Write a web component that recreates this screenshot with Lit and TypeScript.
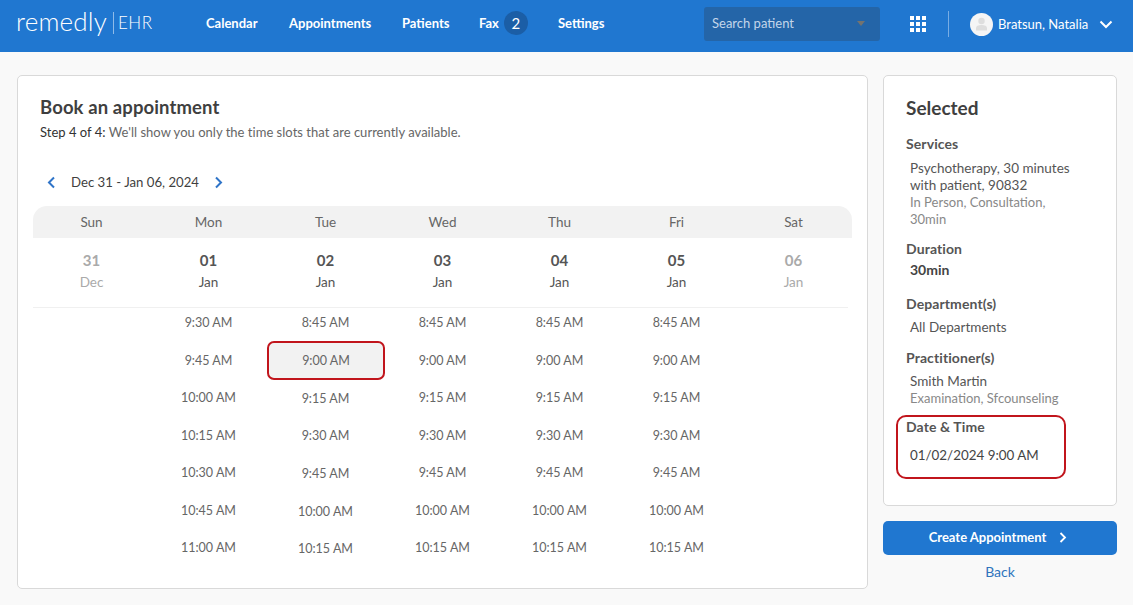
import { LitElement, html, css } from 'lit';
import { customElement } from 'lit/decorators.js';

const days = [
  { name: 'Sun', num: '31', mon: 'Dec', off: true, slots: [] as string[] },
  { name: 'Mon', num: '01', mon: 'Jan', off: false, slots: ['9:30 AM', '9:45 AM', '10:00 AM', '10:15 AM', '10:30 AM', '10:45 AM', '11:00 AM'] },
  { name: 'Tue', num: '02', mon: 'Jan', off: false, slots: ['8:45 AM', '9:00 AM', '9:15 AM', '9:30 AM', '9:45 AM', '10:00 AM', '10:15 AM'] },
  { name: 'Wed', num: '03', mon: 'Jan', off: false, slots: ['8:45 AM', '9:00 AM', '9:15 AM', '9:30 AM', '9:45 AM', '10:00 AM', '10:15 AM'] },
  { name: 'Thu', num: '04', mon: 'Jan', off: false, slots: ['8:45 AM', '9:00 AM', '9:15 AM', '9:30 AM', '9:45 AM', '10:00 AM', '10:15 AM'] },
  { name: 'Fri', num: '05', mon: 'Jan', off: false, slots: ['8:45 AM', '9:00 AM', '9:15 AM', '9:30 AM', '9:45 AM', '10:00 AM', '10:15 AM'] },
  { name: 'Sat', num: '06', mon: 'Jan', off: true, slots: [] as string[] },
];

@customElement('app-root')
export class AppRoot extends LitElement {
  static styles = css`
    :host {
      display: block;
      height: 605px;
      overflow: hidden;
      background: #f9f9f9;
      font-family: 'Lato', 'Open Sans', sans-serif;
      color: #444;
      font-size: 14px;
    }
    * { box-sizing: border-box; }

    .top {
      height: 52px;
      background: #2077d0;
      color: #fff;
      display: flex;
      align-items: center;
      padding: 0 0 4px 16px;
    }
    .logo { display: flex; align-items: center; width: 190px; padding-bottom: 3px; }
    .logo .name { font-size: 26px; font-weight: 300; letter-spacing: 0.2px; line-height: 30px; width: 97px; margin-bottom: 3px; }
    .logo .ehr { font-size: 17px; font-weight: 300; border-left: 1px solid #8fbbe8; padding-left: 4px; line-height: 22px; letter-spacing: 0.5px; }
    .nav { display: flex; align-items: center; font-size: 13px; font-weight: 700; padding-bottom: 2px; }
    .nav a { display: block; }
    .nav .calendar { width: 83px; }
    .nav .appts { width: 113px; }
    .nav .patients { width: 77px; }
    .nav .fax { width: 79px; display: flex; align-items: center; gap: 5px; }
    .nav .settings { width: 146px; }
    .badge {
      width: 24px;
      height: 24px;
      border-radius: 50%;
      background: #1b5ea6;
      display: flex;
      align-items: center;
      justify-content: center;
      font-weight: 400;
      font-size: 15px;
    }
    .search {
      width: 176px;
      height: 34px;
      border-radius: 3px;
      background: #2465a8;
      color: #c3d5ea;
      display: flex;
      align-items: center;
      justify-content: space-between;
      padding: 0 15px 2px 8px;
      font-size: 13px;
    }
    .caret { width: 0; height: 0; border: 4px solid transparent; border-top: 5px solid #74736f; border-bottom: 0; }
    .apps { margin-left: 30px; width: 16px; height: 16px; display: grid; grid-template-columns: repeat(3, 4px); grid-auto-rows: 4px; gap: 2px; }
    .apps i { background: #fff; display: block; }
    .vline { width: 1px; height: 26px; background: #78ade4; margin-left: 22px; }
    .avatar { width: 23px; height: 23px; border-radius: 50%; background: #f5f5f5; margin-left: 21px; display: flex; align-items: center; justify-content: center; }
    .user { margin-left: 5px; font-size: 13px; width: 101px; padding-bottom: 1px; }

    .main { display: flex; align-items: flex-start; gap: 15px; padding: 23px 16px 0 17px; }
    .card { background: #fff; border: 1px solid #d9d9d9; border-radius: 5px; }
    .book { width: 851px; height: 514px; padding: 0 15px; }
    .book h1 { margin: 19px 0 0 7px; font-size: 18.5px; line-height: 24px; font-weight: 700; color: #3f3f3f; letter-spacing: 0.1px; }
    .step { margin: 4px 0 0 7px; font-size: 13px; line-height: 18px; color: #666; letter-spacing: 0.02px; }
    .step b { font-weight: 400; color: #333; }
    .week { display: flex; align-items: center; margin: 30px 0 0 14px; height: 22px; font-size: 13.2px; color: #3f3f3f; }
    .week .label { margin: 0 15px 0 15px; width: 128px; white-space: nowrap; }
    .grid { display: grid; grid-template-columns: repeat(7, 117px); width: 819px; }
    .heads { background: #f2f2f2; border-radius: 14px 14px 0 0; height: 32px; margin-top: 13px; align-items: center; text-align: center; color: #666; font-size: 13.5px; }
    .dates { height: 70px; border-bottom: 1px solid #f0f0f0; text-align: center; width: 815px; }
    .dates .d { padding-top: 11px; font-size: 13.5px; color: #555; line-height: 22px; }
    .dates .d b { display: block; font-size: 15px; font-weight: 700; color: #555; }
    .dates .d.off, .dates .d.off b { color: #aaa; }
    .col { display: flex; flex-direction: column; align-items: stretch; padding-top: 4px; }
    .slot { height: 22px; line-height: 22px; margin-bottom: 15.5px; text-align: center; font-size: 12.5px; color: #666; }
    .col.tue .slot { margin-bottom: 15.7px; }
    .col.tue .slot.sel {
      height: 39px;
      margin: -8.5px -1px 7.5px 0;
      line-height: 35px;
      background: #f2f2f2;
      border: 2px solid #c1151c;
      border-radius: 7px;
    }

    .side { width: 234px; }
    .selected { height: 431px; padding: 0 22px; }
    .selected h2 { margin: 20px 0 0; font-size: 19px; line-height: 24px; font-weight: 700; color: #3f3f3f; }
    .selected h3 { margin: 0; font-size: 14px; line-height: 18px; font-weight: 700; color: #555; letter-spacing: 0.1px; }
    .val { margin-left: 4px; font-size: 13.5px; line-height: 17px; color: #555; }
    .val.sub { color: #888; font-size: 13px; max-width: 150px; }
    .services { margin-top: 15px; }
    .services .val:first-of-type { margin-top: 7px; }
    .duration { margin-top: 12px; }
    .duration .val { margin-top: 3px; font-weight: 700; font-size: 14px; color: #444; }
    .dept { margin-top: 17px; }
    .dept .val { margin-top: 6px; }
    .prac { margin-top: 13px; }
    .prac .val:first-of-type { margin-top: 6px; }
    .dt {
      margin: 8px 0 0 -10px;
      width: 170px;
      height: 64px;
      border: 2px solid #c1151c;
      border-radius: 10px;
      padding: 1px 0 0 8px;
    }
    .dt .val { margin-top: 11px; font-size: 13.4px; color: #444; }
    .create {
      margin-top: 15px;
      height: 34px;
      width: 234px;
      padding: 0 4px 2px 0;
      background: #2077d0;
      color: #fff;
      border: 0;
      border-radius: 5px;
      font: 700 13px 'Lato', sans-serif;
      display: flex;
      align-items: center;
      justify-content: center;
      gap: 13px;
    }
    .back { display: block; text-align: center; margin-top: 8px; color: #2f74bd; font-size: 14px; line-height: 18px; }
  `;

  render() {
    return html`
      <div class="top">
        <div class="logo"><span class="name">remedly</span><span class="ehr">EHR</span></div>
        <nav class="nav">
          <a class="calendar">Calendar</a>
          <a class="appts">Appointments</a>
          <a class="patients">Patients</a>
          <a class="fax">Fax <span class="badge">2</span></a>
          <a class="settings">Settings</a>
        </nav>
        <div class="search"><span>Search patient</span><span class="caret"></span></div>
        <div class="apps">${[...Array(9)].map(() => html`<i></i>`)}</div>
        <div class="vline"></div>
        <div class="avatar">
          <svg width="13" height="14" viewBox="0 0 13 14"><circle cx="6.5" cy="4" r="3.2" fill="#dedede"/><path d="M1 13.500V11c0-2 2-3 5.500-3s5.500 1 5.500 3v2.500z" fill="#dedede"/></svg>
        </div>
        <div class="user">Bratsun, Natalia</div>
        <svg width="14" height="9" viewBox="0 0 14 9"><path d="M1.500 1.500L7 7l5.500-5.500" fill="none" stroke="#fff" stroke-width="2"/></svg>
      </div>
      <div class="main">
        <section class="card book">
          <h1>Book an appointment</h1>
          <div class="step"><b>Step 4 of 4:</b> We'll show you only the time slots that are currently available.</div>
          <div class="week">
            <svg width="9" height="13" viewBox="0 0 9 13"><path d="M7 1.500L2 6.500l5 5" fill="none" stroke="#2f74c8" stroke-width="2"/></svg>
            <span class="label">Dec 31 - Jan 06, 2024</span>
            <svg width="9" height="13" viewBox="0 0 9 13"><path d="M2 1.500l5 5-5 5" fill="none" stroke="#2f74c8" stroke-width="2"/></svg>
          </div>
          <div class="grid heads">${days.map((d) => html`<div>${d.name}</div>`)}</div>
          <div class="grid dates">
            ${days.map((d) => html`<div class="d ${d.off ? 'off' : ''}"><b>${d.num}</b>${d.mon}</div>`)}
          </div>
          <div class="grid">
            ${days.map((d) => html`<div class="col ${d.name === 'Tue' ? 'tue' : ''}">
              ${d.slots.map((s, i) => html`<div class="slot ${d.name === 'Tue' && i === 1 ? 'sel' : ''}">${s}</div>`)}
            </div>`)}
          </div>
        </section>
        <div class="side">
          <section class="card selected">
            <h2>Selected</h2>
            <div class="services">
              <h3>Services</h3>
              <div class="val">Psychotherapy, 30 minutes with patient, 90832</div>
              <div class="val sub">In Person, Consultation, 30min</div>
            </div>
            <div class="duration"><h3>Duration</h3><div class="val">30min</div></div>
            <div class="dept"><h3>Department(s)</h3><div class="val">All Departments</div></div>
            <div class="prac">
              <h3>Practitioner(s)</h3>
              <div class="val">Smith Martin</div>
              <div class="val sub">Examination, Sfcounseling</div>
            </div>
            <div class="dt"><h3>Date &amp; Time</h3><div class="val">01/02/2024 9:00 AM</div></div>
          </section>
          <button class="create">Create Appointment
            <svg width="8" height="11" viewBox="0 0 8 11"><path d="M1.500 1l4.500 4.500L1.500 10" fill="none" stroke="#fff" stroke-width="1.800"/></svg>
          </button>
          <a class="back">Back</a>
        </div>
      </div>
    `;
  }
}
